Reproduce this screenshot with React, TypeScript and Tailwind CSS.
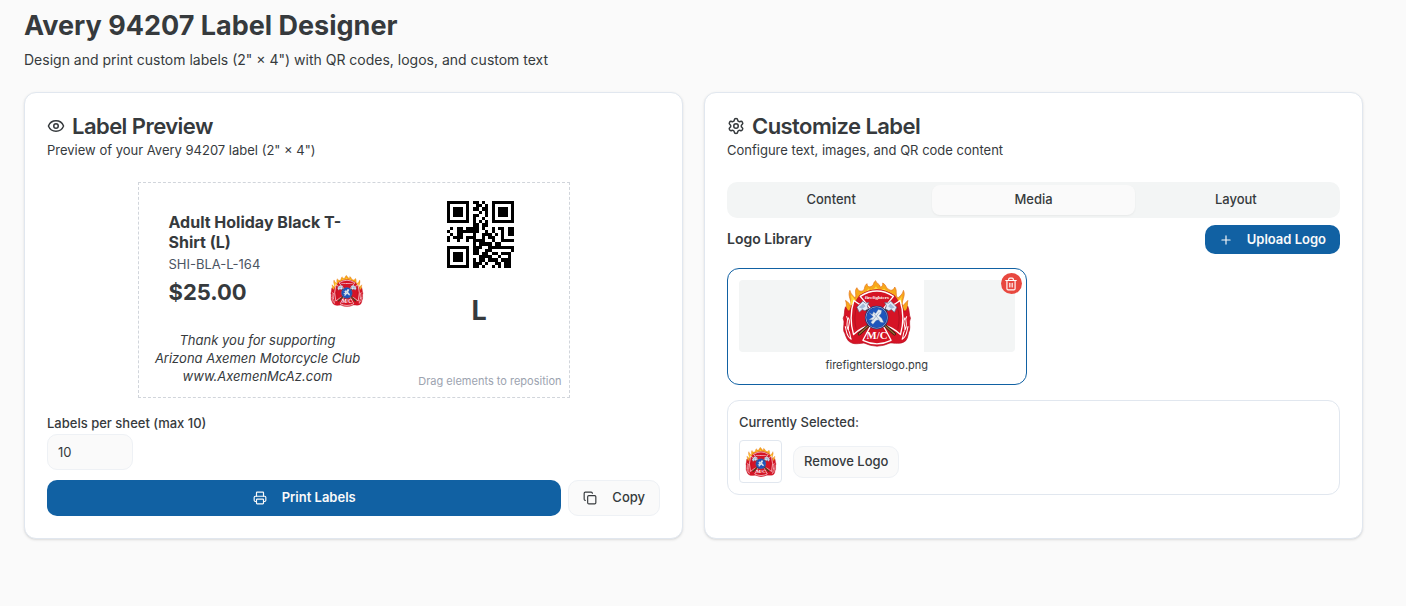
import React, { useState } from "react";
import { Copy, Eye, Plus, Printer, Settings, Trash2 } from "lucide-react";

const QR_ROWS = [
  "111111101101001111111",
  "100000100110101000001",
  "101110101101101011101",
  "101110100010101011101",
  "101110101100101011101",
  "100000101001001000001",
  "111111101010101111111",
  "000000001101100000000",
  "010110111101001011011",
  "100111111100101001011",
  "010110001001110101011",
  "101110111001011001000",
  "100100101111001001111",
  "000000001011110110000",
  "111111101110011111111",
  "100000101100110000001",
  "101110101101101101110",
  "101110100011110010010",
  "101110101011011101110",
  "100000101110100110110",
  "111111101101001010110",
];

const qrPath = QR_ROWS.map((row, y) =>
  [...row].map((cell, x) => (cell === "1" ? `M${x} ${y}h1v1h-1z` : "")).join("")
).join("");

function QrCode({ className }: { className?: string }) {
  return (
    <svg viewBox="0 0 21 21" className={className} shapeRendering="crispEdges" role="img" aria-label="QR code">
      <path d={qrPath} fill="#000" />
    </svg>
  );
}

function Axe() {
  return (
    <g>
      <path d="M128 106 L224 192" stroke="#3a2110" strokeWidth="9" strokeLinecap="round" />
      <path d="M128 106 L224 192" stroke="#9a6533" strokeWidth="4" strokeLinecap="round" />
      <path
        d="M112 112 L130 94 L137 100 L148 98 L143 108 L146 117 L136 123 L128 119 L119 127 Z"
        fill="#e2ebf6"
        stroke="#56698a"
        strokeWidth="2"
      />
      <path d="M118 113 L131 101 L138 109 L128 117 Z" fill="#a3bad8" />
    </g>
  );
}

function FireLogo({ className }: { className?: string }) {
  return (
    <svg viewBox="68 31 208 200" className={className} role="img" aria-label="Firefighters logo">
      <path
        d="M82 146 C72 126 86 112 78 92 C88 98 91 103 93 110 C99 94 83 80 91 62 C94 75 103 78 107 86 C112 72 103 65 112 54 C116 66 126 66 132 62 C137 54 133 49 142 42 C143 51 150 54 157 49 C164 44 160 38 168 33 C169 42 182 42 181 52 C188 52 190 45 189 40 C201 45 198 58 209 60 C216 64 222 60 225 52 C234 64 225 74 234 85 C241 78 248 75 251 62 C259 80 243 92 249 108 C253 104 257 99 264 92 C260 112 269 128 259 146 Z"
        fill="#f7a81b"
        stroke="#e46f17"
        strokeWidth="2"
      />
      <path
        d="M93 96 C98 88 94 82 95 76 C102 84 108 91 109 96 L126 75 C137 70 142 63 146 56 C152 64 163 61 169 50 C174 61 184 64 193 56 C202 65 212 68 218 77 L234 98 C235 91 242 87 247 78 C242 94 249 99 243 111 L96 113 Z"
        fill="#ffdb3d"
      />
      <path
        d="M120 77 Q172 42 224 77 L236 95 Q248 102 251 120 C255 130 263 118 264 110 C270 125 267 135 272 145 C266 157 272 168 269 181 C264 190 266 202 258 212 C244 225 222 218 211 219 Q172 238 133 219 C118 220 102 226 87 213 C79 204 78 193 73 184 C70 171 77 158 71 145 C77 135 73 124 78 111 C83 119 87 130 92 119 Q96 103 108 95 Z"
        fill="#d51426"
        stroke="#b90f20"
        strokeWidth="2"
      />
      <path
        d="M81 139 C90 151 75 163 87 181 C84 165 96 158 86 143 M77 169 C82 184 79 198 95 208 C90 196 93 191 88 183 M261 139 C252 151 267 163 255 181 C258 165 246 158 256 143 M265 169 C260 184 263 198 247 208 C252 196 249 191 254 183"
        fill="none"
        stroke="#fff"
        strokeWidth="3"
        strokeLinejoin="round"
      />
      <path
        d="M122 80 Q172 48 221 80 L188 120 Q214 112 241 92 Q257 142 242 194 Q216 169 190 166 L214 211 Q172 232 130 211 L154 166 Q128 169 102 194 Q87 142 103 92 Q130 112 156 120 Z"
        fill="#d51426"
        stroke="#fff"
        strokeWidth="4"
        strokeLinejoin="round"
      />
      <path
        d="M112 110 Q101 142 110 178 M232 110 Q243 142 234 178"
        fill="none"
        stroke="#a30f1e"
        strokeWidth="2"
      />
      <Axe />
      <g transform="translate(343 0) scale(-1 1)">
        <Axe />
      </g>
      <circle cx="171" cy="143" r="35" fill="#172e76" />
      <circle cx="171" cy="143" r="32" fill="none" stroke="#c3d4ee" strokeWidth="2" />
      <circle cx="171" cy="143" r="30" fill="#1e56bc" />
      <path
        d="M149 129 L158 134 L162 126 L168 131 L176 119 L186 122 L184 131 L178 138 L186 145 L192 158 L183 157 L176 150 L169 152 L160 163 L154 158 L159 150 L148 150 L161 141 Z"
        fill="#e6edf4"
        stroke="#778baa"
        strokeWidth="1"
      />
      <path d="M163 131 L181 153 M179 127 L157 155" stroke="#8da1ba" strokeWidth="2" />
      <text x="172" y="88" textAnchor="middle" fill="#fff" className="font-['Liberation_Serif',serif] text-[15px] font-bold">
        firefighters
      </text>
      <text
        x="172"
        y="206"
        textAnchor="middle"
        fill="#fff"
        className="font-['Liberation_Serif',serif] text-[32px] font-bold"
      >
        M/C
      </text>
    </svg>
  );
}

function Card({
  icon,
  title,
  description,
  children,
}: {
  icon: React.ReactNode;
  title: string;
  description: string;
  children: React.ReactNode;
}) {
  return (
    <section className="rounded-xl border border-[#e1e7ef] bg-white p-[22px] shadow-sm">
      <h2 className="flex items-center gap-[7px] text-[22px] leading-[22px] font-semibold tracking-tight">
        {icon}
        {title}
      </h2>
      <p className="mt-1 text-[13px] leading-[18px]">{description}</p>
      <div className="mt-[23px]">{children}</div>
    </section>
  );
}

const outlineButton =
  "flex items-center justify-center rounded-[10px] border border-[#eef1f5] bg-[#fafafa] text-[13px] font-medium";

function LabelPreview() {
  const [count, setCount] = useState("10");
  return (
    <Card icon={<Eye size={18} />} title="Label Preview" description={'Preview of your Avery 94207 label (2" × 4")'}>
      <div className="relative mx-auto h-[216px] w-[432px] border border-dashed border-[#d1d5db] bg-white">
        <div className="absolute top-[29px] left-[30px] w-[184px]">
          <p className="text-[16px] leading-5 font-bold">Adult Holiday Black T-Shirt (L)</p>
          <p className="mt-1 text-[13px] leading-4 text-[#4b5563]">SHI-BLA-L-164</p>
          <p className="mt-1 text-[22px] leading-8 font-bold">$25.00</p>
        </div>
        <FireLogo className="absolute top-[92px] left-[191px] h-8 w-[34px]" />
        <p className="absolute top-[148px] left-[11px] w-[216px] text-center text-[13px] leading-[18px] italic">
          Thank you for supporting
          <br />
          Arizona Axemen Motorcycle Club
          <br />
          www.AxemenMcAz.com
        </p>
        <QrCode className="absolute top-[18px] left-[308px] size-[67px]" />
        <p className="absolute top-[112px] left-[333px] text-[27px] leading-8 font-bold">L</p>
        <p className="absolute right-[7px] bottom-2 text-[11px] leading-4 text-[#9ca3af]">Drag elements to reposition</p>
      </div>
      <label htmlFor="sheet-count" className="mt-[18px] block text-[13px] leading-[14px] font-medium">
        Labels per sheet (max 10)
      </label>
      <input
        id="sheet-count"
        type="text"
        inputMode="numeric"
        value={count}
        onChange={(e) => setCount(e.target.value)}
        className="mt-1 block h-9 w-[86px] rounded-[10px] border border-[#eef1f5] bg-[#fafafa] px-[10px] text-[13px]"
      />
      <div className="mt-[10px] flex gap-[7px]">
        <button
          type="button"
          className="flex h-9 flex-1 items-center justify-center gap-[15px] rounded-[10px] bg-[#1161a3] text-[13px] font-semibold text-[#fafafa]"
        >
          <Printer size={14} />
          Print Labels
        </button>
        <button type="button" className={`${outlineButton} h-9 gap-[15px] px-[14px]`}>
          <Copy size={14} />
          Copy
        </button>
      </div>
    </Card>
  );
}

function CustomizeLabel() {
  const [tab, setTab] = useState("Media");
  return (
    <Card
      icon={<Settings size={18} />}
      title="Customize Label"
      description="Configure text, images, and QR code content"
    >
      <div role="tablist" className="grid h-9 grid-cols-3 rounded-[10px] bg-[#f3f5f5] p-[3px]">
        {["Content", "Media", "Layout"].map((name) => (
          <button
            key={name}
            type="button"
            role="tab"
            aria-selected={tab === name}
            onClick={() => setTab(name)}
            className={`rounded-lg text-[13px] font-medium ${tab === name ? "bg-[#fafafa] shadow-xs" : ""}`}
          >
            {name}
          </button>
        ))}
      </div>
      <div className="mt-[7px] flex items-start justify-between">
        <h3 className="text-[14px] leading-7 font-semibold">Logo Library</h3>
        <button
          type="button"
          className="flex h-[29px] items-center gap-[14px] rounded-[10px] bg-[#1161a3] px-[14px] text-[13px] font-semibold text-[#fafafa]"
        >
          <Plus size={14} />
          Upload Logo
        </button>
      </div>
      <div className="mt-[14px] grid grid-cols-2 gap-[14px]">
        <div className="relative rounded-xl border border-[#1161a3] p-[11px]">
          <div className="flex h-[72px] justify-center rounded bg-[#f3f5f5]">
            <div className="flex w-[94px] justify-center bg-white">
              <FireLogo className="h-[67px] w-[70px]" />
            </div>
          </div>
          <p className="mt-[5px] text-center text-[11px] leading-4">firefighterslogo.png</p>
          <button
            type="button"
            aria-label="Delete firefighterslogo.png"
            className="absolute top-1 right-1 flex size-[21px] items-center justify-center rounded-full bg-[#e8483f] text-white"
          >
            <Trash2 size={14} />
          </button>
        </div>
      </div>
      <div className="mt-[15px] rounded-xl border border-[#e1e7ef] p-[11px]">
        <p className="text-[13px] leading-5 font-medium">Currently Selected:</p>
        <div className="mt-2 flex items-center gap-[11px]">
          <div className="flex size-[43px] items-center justify-center rounded border border-[#e1e7ef]">
            <FireLogo className="h-[30px] w-8" />
          </div>
          <button type="button" className={`${outlineButton} h-8 px-[10px]`}>
            Remove Logo
          </button>
        </div>
      </div>
    </Card>
  );
}

export default function App() {
  return (
    <main className="min-h-screen bg-[#fafafa] pr-[43px] pb-16 pl-6 font-[Inter,sans-serif] text-[#363a3d]">
      <header className="pt-[10px]">
        <h1 className="text-[27px] leading-8 font-bold">Avery 94207 Label Designer</h1>
        <p className="mt-[7px] text-[14px] leading-[22px]">
          Design and print custom labels (2" × 4") with QR codes, logos, and custom text
        </p>
      </header>
      <div className="mt-[21px] grid grid-cols-2 gap-[21px]">
        <LabelPreview />
        <CustomizeLabel />
      </div>
    </main>
  );
}
